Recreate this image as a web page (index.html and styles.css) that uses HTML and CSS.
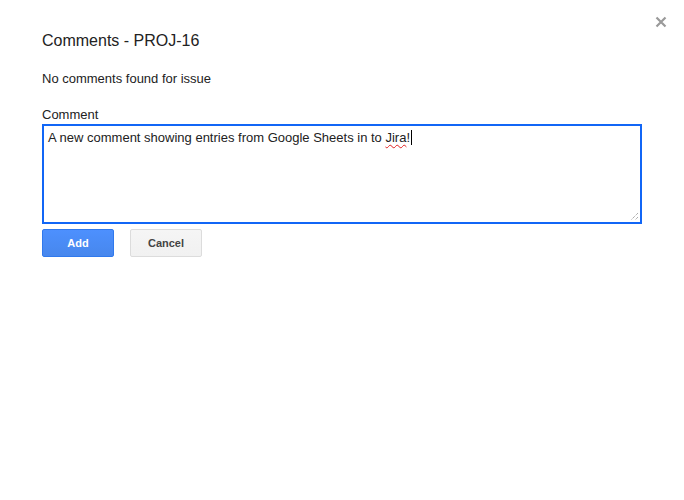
FILE: index.html
```html
<!DOCTYPE html>
<html lang="en">
<head>
    <meta charset="UTF-8">
    <title>Comments - PROJ-16</title>
    <link rel="stylesheet" href="styles.css">
</head>
<body>
<div class="dialog">
    <button class="close" title="Close">
        <svg width="12" height="12" viewBox="0 0 12 12"><path d="M1.5 1.5 L10.5 10.5 M10.5 1.5 L1.5 10.5" stroke="#9a9a9a" stroke-width="2.2"/></svg>
    </button>

    <h2 class="title">Comments - PROJ-16</h2>
    <p class="empty">No comments found for issue</p>

    <label class="label">Comment</label>
    <div class="field">
        A new comment showing entries from Google Sheets in to <span class="typo">Jira</span>!<span class="caret"></span>
        <svg class="grip" width="9" height="9" viewBox="0 0 9 9"><path d="M8 1 L1 8 M8 5 L5 8" stroke="#8a8a8a" stroke-width="1" stroke-dasharray="1 1"/></svg>
    </div>

    <div class="actions">
        <button class="btn btn-add">Add</button>
        <button class="btn btn-cancel">Cancel</button>
    </div>
</div>
</body>
</html>
```

FILE: styles.css
```css
body {
    margin: 0;
    font-family: "Liberation Sans", Arial, sans-serif;
    color: #222;
    background: #fff;
}
.dialog {
    position: relative;
    padding: 31px 42px 0;
}
.close {
    position: absolute;
    top: 16px;
    right: 17px;
    width: 12px;
    height: 12px;
    padding: 0;
    border: none;
    background: none;
}
.close svg {
    display: block;
}
.title {
    margin: 0;
    font-size: 16px;
    font-weight: normal;
    line-height: 20px;
    color: #222;
}
.empty {
    margin: 20px 0 0;
    font-size: 13px;
    line-height: 16px;
}
.label {
    display: block;
    margin-top: 20px;
    font-size: 13px;
    line-height: 16px;
}
.field {
    position: relative;
    box-sizing: border-box;
    width: 600px;
    height: 100px;
    margin-top: 1px;
    padding: 4px 4px;
    border: 2px solid #1166f6;
    font-size: 13px;
    line-height: 16px;
    color: #222;
}
.typo {
    text-decoration: underline wavy #e02020;
    text-decoration-thickness: 1px;
    text-underline-offset: 2px;
}
.caret {
    display: inline-block;
    width: 1px;
    height: 15px;
    margin-left: 1px;
    background: #000;
    vertical-align: -3px;
}
.grip {
    position: absolute;
    right: 1px;
    bottom: 1px;
}
.actions {
    display: flex;
    gap: 16px;
    margin-top: 5px;
}
.btn {
    box-sizing: border-box;
    width: 72px;
    height: 28px;
    border-radius: 2px;
    font-family: "Liberation Sans", Arial, sans-serif;
    font-size: 11px;
    font-weight: bold;
    cursor: pointer;
}
.btn-add {
    border: 1px solid #3079ed;
    background: linear-gradient(#4d90fe, #4787ed);
    color: #fff;
}
.btn-cancel {
    border: 1px solid #dcdcdc;
    background: linear-gradient(#f5f5f5, #f1f1f1);
    color: #444;
}
```
